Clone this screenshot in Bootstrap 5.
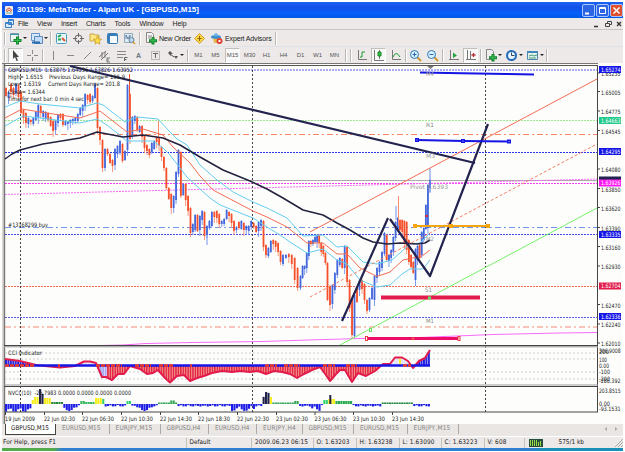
<!DOCTYPE html>
<html lang="en">
<head>
<meta charset="utf-8">
<title>MetaTrader</title>
<link href="https://cdn.jsdelivr.net/npm/bootstrap@5.3.0/dist/css/bootstrap.min.css" rel="stylesheet">
<style>
body{width:625px;height:452px;overflow:hidden;background:#fff;font:7px/1 "Liberation Sans",Arial,sans-serif;color:#222;padding:2px 2px 0}
.win{width:621px;background:#ece9e8}
.titlebar{height:16px;background:linear-gradient(#1c63f2,#1350e8 35%,#0560fa 70%,#0058e8);color:#fff;font-weight:700;font-size:8px;padding-left:3px}
.menus{height:12px;border-bottom:1px solid #c9c6c3}
.menus span{margin-right:9px}
.menus span,.lbl,.stat span{white-space:pre;display:inline-block}
.tools{height:17px}
.tools.one{height:16px}
.cell{width:17px;height:15px;flex:none;display:flex;align-items:center;justify-content:center}
.cell svg{width:13px;height:13px;overflow:visible}
.on{background:#f8f8f8;border:1px solid #c2bfba;border-right-color:#fff;border-bottom-color:#fff;width:15px;margin:0 1px}
.tf{font-size:6px;color:#555}
.caret{width:4px;flex:none;display:flex;align-items:center}
.caret::after{content:"";border:2px solid transparent;border-top-color:#222;border-bottom:0;margin-left:-1px}
.sep{flex:none;display:flex;justify-content:center}
.sep::after{content:"";width:2px;height:13px;border-left:1px solid #bab7b2;border-right:1px solid #fff;margin:auto}
.w3{width:3px}.w4{width:4px}.w9{width:9px}.w5{width:5px}
.plot{display:block;height:361px;width:621px}
.plot text,.tabsbar,.stat{font-family:"DejaVu Sans Condensed","DejaVu Sans",sans-serif}
.tabsbar{height:12px;background:#e9e6e3;font-size:6.4px;color:#888}
.tabsbar .tb{height:10px;flex:none;line-height:9px;border-right:1px solid #aaa;padding-left:6px;white-space:pre}
.tabsbar .act{height:11px;width:51px;background:#fff;border:1px solid #444;border-top:0;color:#222;margin-left:3px;padding-left:5px}
.stat{height:12px;border-top:1px solid #fff;font-size:6.4px}
.stat .box{border-right:1px solid #c5c2bd;height:10px;flex:none;line-height:9px;padding-left:3px}
.stat .box.first{padding-left:1px}
.task{height:3px;background:linear-gradient(90deg,#55ab4b 0 52px,#2f80cf 60px 530px,#1a8fb8 540px)}
.wb{width:13px;height:13px;border-radius:2px;border:1px solid #a9c5fa;background:#2c66e5;margin-left:1px}
.wb.red{background:#e0502c}
.wb svg{display:block}
</style>
<script src="https://cdn.jsdelivr.net/npm/bootstrap@5.3.0/dist/js/bootstrap.bundle.min.js"></script>
</head>
<body>
<div class="win">
<div class="titlebar d-flex align-items-center">
<svg width="8" height="9" class="me-1"><rect width="8" height="9" rx="1" fill="#f4ece4"/><path d="M1 5Q4-1 7 5M2 6Q4 2 6 6" stroke="#d4523b" fill="none"/><path d="M1 7h6" stroke="#6a9"/></svg>
<span class="lbl" data-w="182">301199: MetaTrader - Alpari UK - [GBPUSD,M15]</span>
<div class="ms-auto d-flex">
<div class="wb"><svg width="11" height="11"><path d="M2 8.5h4" stroke="#fff" stroke-width="2"/></svg></div>
<div class="wb"><svg width="11" height="11"><path d="M2.5 3v5.500h6v-6h-6v1h6" stroke="#fff" fill="none"/></svg></div>
<div class="wb red"><svg width="11" height="11"><path d="M2.500 2.500l6 6m0-6l-6 6" stroke="#fff" stroke-width="1.500"/></svg></div>
</div>
</div>
<div class="menus d-flex align-items-center">
<svg width="16" height="11"><path d="M6.500 1.500h5v5h-5zM3.500 4.500h6v5h-6z" fill="#dcebfa" stroke="#3c7dbd"/><path d="M4 5.500h5M7 2.500h4" stroke="#3c8de0"/></svg>
<span data-w="10">File</span><span data-w="15">View</span><span data-w="16">Insert</span><span data-w="19.500">Charts</span><span data-w="16">Tools</span><span data-w="24">Window</span><span data-w="14">Help</span>
<svg class="ms-auto" width="32" height="10"><path d="M3 7.500h4" stroke="#333" stroke-width="1.500"/><path d="M14.500 4.500h4v3h-4zM16.500 4V2.500h4v3h-2" stroke="#444" fill="none"/><path d="M26 3l4 4m0-4l-4 4" stroke="#333" stroke-width="1.300"/></svg>
</div>
<div class="tools one d-flex align-items-center">
<div class="sep w5"></div>
<div class="cell"><svg viewBox="0 0 13 13"><path d="M1.500 1.500h8v8h-8z" fill="#edf6ef" stroke="#7d9bad"/><path d="M1 2.500h9" stroke="#3a99a9"/><path d="M8.500 4.500v8M4.500 8.500h8" stroke="#14852c" stroke-width="3"/><path d="M8.500 5.500v6M5.500 8.500h6" stroke="#32bd4c"/></svg></div><div class="caret"></div>
<div class="cell"><svg viewBox="0 0 13 13"><path d="M1.500 1.500h8v7h-8z" fill="#d5e8fc" stroke="#6594c8"/><path d="M4.500 4.500h8v7h-8z" fill="#c0dcf8" stroke="#5c89bb"/><path d="M2 10.500h8" stroke="#256bb0" stroke-width="2"/></svg></div><div class="caret"></div>
<div class="sep w4"></div>
<div class="cell"><svg viewBox="0 0 13 13"><rect x="1.500" y="1.500" width="10" height="10" rx="1" fill="#e7f7fc" stroke="#4d9cbb"/><path d="M3 5l3-2M3 7.500h3" stroke="#20a650" stroke-width="2"/><path d="M7 6l3 3" stroke="#dc5732" stroke-width="2"/></svg></div>
<div class="cell"><svg viewBox="0 0 13 13" fill="none" stroke="#666"><circle cx="6.500" cy="6.500" r="3.500"/><path d="M6.500 1v4m0 3v4M1 6.500h4m3 0h4"/></svg></div>
<div class="cell"><svg viewBox="0 0 13 13"><path d="M1 2h4l1 1h4v6H1z" fill="#ffe987" stroke="#c9a544"/><path d="M8.500 4l1.200 3 3 .3-2.400 2 .7 3-2.500-1.700L6 12.200l.7-3-2.400-2 3-.2z" fill="#ffe04b" stroke="#c4921d" stroke-width=".7"/></svg></div>
<div class="cell"><svg viewBox="0 0 13 13"><rect x="1.500" y="1.500" width="10" height="10" rx="1" fill="#f4faff" stroke="#377bb5"/><path d="M2 3h9M3 4v7" stroke="#397fbb" stroke-width="2"/></svg></div>
<div class="cell"><svg viewBox="0 0 13 13"><path d="M1.500 1.500h8v9h-8z" fill="#dcecf8" stroke="#98a9b6"/><path d="M3 7V3l2 4 2-4v4" stroke="#6585a8" fill="none"/><circle cx="8.500" cy="8" r="2.500" fill="#bcdaf0" stroke="#69839b"/><path d="M10 10l2 2" stroke="#d39a26" stroke-width="1.600"/></svg></div>
<div class="sep w4"></div>
<div class="cell"><svg viewBox="0 0 13 13"><path d="M2.500.5h5l2 2v8h-7z" fill="#f6f6f6" stroke="#888"/><path d="M4 4h4M4 6h3" stroke="#888"/><path d="M9 5v7.500M5 8.800h8" stroke="#15852c" stroke-width="3"/><path d="M9 6v5M6 8.800h6" stroke="#38c258"/></svg></div>
<span class="lbl" data-w="32">New Order</span>
<div class="cell"><svg viewBox="0 0 13 13"><path d="M6.500 1.500l5 5-5 5-5-5z" fill="#ffd649" stroke="#cfa02a"/><path d="M6.500 4v5M4.500 6.500h4" stroke="#8a6511"/></svg></div>
<div class="cell"><svg viewBox="0 0 13 13"><ellipse cx="6" cy="5" rx="5" ry="2" fill="#3e8ed0"/><path d="M3 4q3-6 6 0z" fill="#71b8e9"/><path d="M3 6q3 2 6 0l-1 5H4z" fill="#e4b94a"/><circle cx="9.500" cy="9" r="3" fill="#dd3f31"/><path d="M8.500 8h2v2h-2z" fill="#fff"/></svg></div>
<span class="lbl" data-w="46.500">Expert Advisors</span><div class="sep w9"></div>
</div>
<div class="tools d-flex align-items-center border-top">
<div class="sep w5"></div>
<div class="cell on"><svg viewBox="0 0 13 13"><path d="M4 1v9l2-2 1.500 4 1.500-.6L7.500 8H10z" fill="#444"/></svg></div>
<div class="cell"><svg viewBox="0 0 13 13"><path d="M6.500 1v4m0 3v4M1 6.500h4m3 0h4" stroke="#888"/></svg></div><div class="sep w4"></div>
<div class="cell"><svg viewBox="0 0 13 13"><path d="M6.500 2v9" stroke="#888"/></svg></div>
<div class="cell"><svg viewBox="0 0 13 13"><path d="M3 6.500h7" stroke="#888"/></svg></div>
<div class="cell"><svg viewBox="0 0 13 13"><path d="M3 10l7-7" stroke="#888"/></svg></div>
<div class="cell"><svg viewBox="0 0 13 13"><path d="M1 8l7-6M3 11l7-7M4 3v6M7 3v6M9 9v4m0-4h3m-3 2h2m-2 2h3" stroke="#777" fill="none"/></svg></div>
<div class="cell"><svg viewBox="0 0 13 13"><path d="M2 2.500h9M2 5.500h9M2 8.500h6" stroke="#888"/><path d="M9.500 12V8.500h3m-3 2h2" stroke="#666" fill="none"/></svg></div>
<div class="cell fw-bold text-secondary">A</div>
<div class="cell"><svg viewBox="0 0 13 13"><path d="M2.500 2.500h8v8h-8z" fill="none" stroke="#888" stroke-dasharray="1 1"/><path d="M4 4.500h5M6.500 4v5" stroke="#666"/></svg></div>
<div class="cell"><svg viewBox="0 0 13 13"><path d="M4 2l3 3H5v2L2 4zM8 7h4l-2 3z" fill="#555"/><path d="M4 5l4 3" stroke="#555"/></svg></div><div class="caret"></div><div class="sep w5"></div>
<div class="cell tf">M1</div><div class="cell tf">M5</div><div class="cell tf on">M15</div><div class="cell tf">M30</div><div class="cell tf">H1</div><div class="cell tf">H4</div><div class="cell tf">D1</div><div class="cell tf">W1</div><div class="cell tf">MN</div>
<div class="sep w5"></div><div class="sep w5"></div>
<div class="cell"><svg viewBox="0 0 13 13" fill="none"><path d="M3.500 1v9.500H12" stroke="#777"/><path d="M5 8h2V3h3" stroke="#1c9b2f"/></svg></div>
<div class="cell on"><svg viewBox="0 0 13 13" fill="none"><path d="M2.500 1v10.500H12M7.500 1v9" stroke="#777"/><path d="M6 3h3v4H6z" fill="#2bc53b" stroke="#198327"/></svg></div>
<div class="cell"><svg viewBox="0 0 13 13" fill="none"><path d="M3.500 1v9.500H12" stroke="#777"/><path d="M4 8q3-7 7 0" stroke="#1c9b2f"/></svg></div><div class="sep w3"></div>
<div class="cell"><svg viewBox="0 0 13 13"><path d="M8 8l4 4" stroke="#cb9a2d" stroke-width="2"/><circle cx="5.500" cy="5.500" r="4" fill="#d8f0ff" stroke="#2d78b8"/><path d="M5.500 3.500v4M3.500 5.500h4" stroke="#2369b0"/></svg></div>
<div class="cell"><svg viewBox="0 0 13 13"><path d="M8 8l4 4" stroke="#cb9a2d" stroke-width="2"/><circle cx="5.500" cy="5.500" r="4" fill="#d8f0ff" stroke="#2d78b8"/><path d="M3.500 5.500h4" stroke="#2369b0"/></svg></div><div class="sep w4"></div>
<div class="cell"><svg viewBox="0 0 13 13"><path d="M3.500 1v10M2 10.500h10" stroke="#777" fill="none"/><path d="M6 3.500l4 3L6 9z" fill="#25a23a"/></svg></div>
<div class="cell on"><svg viewBox="0 0 13 13"><path d="M3.500 1v10M2 10.500h10M6.500 2v8" stroke="#777" fill="none"/><path d="M7.500 6h4M9.500 4v4" stroke="#b33" stroke-width="1.300"/></svg></div><div class="sep w3"></div>
<div class="cell"><svg viewBox="0 0 13 13"><path d="M2.500.5h5l2 2v8h-7z" fill="#eee" stroke="#888"/><path d="M9 5v7.500M5 8.800h8" stroke="#15852c" stroke-width="3"/><path d="M9 6v5M6 8.800h6" stroke="#38c258"/></svg></div><div class="caret"></div>
<div class="cell"><svg viewBox="0 0 13 13"><circle cx="6.500" cy="6.500" r="4.500" fill="#eaf6ff" stroke="#246bb7" stroke-width="2"/><path d="M6.500 3.500v3h3" stroke="#345" fill="none"/></svg></div><div class="caret"></div>
<div class="cell"><svg viewBox="0 0 13 13"><path d="M1.500 2.500h10v8h-10z" fill="#e2f1ec" stroke="#4d88b0"/><path d="M1 3h11" stroke="#4287bd" stroke-width="2"/><path d="M3 7l3-1 2 1 3-1M3 9h7" stroke="#4b9d78" fill="none"/></svg></div><div class="caret"></div><div class="sep w4"></div>
</div>
<svg class="plot" id="plot" viewBox="2 63 621 361"></svg>
<div class="tabsbar d-flex">
<div class="tb act"><span data-w="38">GBPUSD,M15</span></div>
<div class="tb" data-b="53.500"><span data-w="38.500">EURUSD,M15</span></div><div class="tb" data-b="51"><span data-w="37">EURJPY,M15</span></div><div class="tb" data-b="48.500"><span data-w="34">GBPUSD,H4</span></div><div class="tb" data-b="48"><span data-w="34.500">EURUSD,H4</span></div><div class="tb" data-b="45.500"><span data-w="33">EURJPY,H4</span></div><div class="tb" data-b="51.500"><span data-w="38">GBPUSD,M15</span></div><div class="tb" data-b="53.500"><span data-w="39">EURUSD,M15</span></div><div class="tb" data-b="51"><span data-w="37">EURJPY,M15</span></div>
<svg class="ms-auto" width="22" height="10"><path d="M6 3v4L3.500 5zM14 3v4l2.500-2z" fill="#aaa"/></svg>
</div>
<div class="stat d-flex align-items-center">
<div class="box first" data-b="184.500"><span data-w="53">For Help, press F1</span></div>
<div class="box" data-b="65.500"><span data-w="21">Default</span></div>
<div class="box" data-b="61.500"><span data-w="53">2009.06.23 06:15</span></div>
<div class="box" data-b="43"><span data-w="33">O: 1.63203</span></div>
<div class="box" data-b="43"><span data-w="33">H: 1.63238</span></div>
<div class="box" data-b="42"><span data-w="32">L: 1.63090</span></div>
<div class="box" data-b="43"><span data-w="33">C: 1.63223</span></div>
<div class="box" data-b="40"><span data-w="19">V: 608</span></div>
<svg class="ms-1" width="14" height="8"><path d="M0 0h14v8H0z" fill="#254e3c"/><path d="M1.500 1v6m2-6v6m2-6v6m2-6v6m2-4v4m2-5v5" stroke="#9bdb43"/></svg>
<span class="ms-3" data-w="25.500">575/1 kb</span>
<svg class="ms-auto" width="9" height="9"><path d="M1 9l8-8M4 9l5-5M7 9l2-2" stroke="#aaa"/></svg>
</div>
</div>
<div class="task"></div>
<script>
// Set text and box widths
document.querySelectorAll('[data-w]').forEach(e=>{
  e.style.display='inline-block';
  const w=e.getBoundingClientRect().width;
  e.style.letterSpacing=((+e.dataset.w-w)/e.textContent.length)+'px';
});
document.querySelectorAll('[data-b]').forEach(e=>e.style.width=e.dataset.b+'px');

let s='';
const L=(x1,y1,x2,y2,c,w=1,d='')=>s+=`<line x1="${x1}" y1="${y1}" x2="${x2}" y2="${y2}" stroke="${c}" stroke-width="${w}" stroke-dasharray="${d}"/>`;
const R=(x,y,w,h,c,st='none')=>s+=`<rect x="${x}" y="${y}" width="${w}" height="${h}" fill="${c}" stroke="${st}"/>`;
const T=(x,y,t,w,c='#222',f=6)=>s+=`<text x="${x}" y="${y}" font-size="${f}" fill="${c}" textLength="${w}" lengthAdjust="spacingAndGlyphs" xml:space="preserve">${t}</text>`;
const P=(p,c,w=1,f='none')=>s+=`<polyline points="${p}" fill="${f}" stroke="${c}" stroke-width="${w}" stroke-linejoin="round"/>`;
R(2,63,621,361,'#fdfefc');
R(2,63,2,361,'#d8d5d2');L(4.5,64,4.5,424,'#777',1.4);
R(2,63,596,1,'#777');R(4,65,594,1,'#555');
L(597.5,65,597.5,412,'#444');

// Horizontal levels
L(5,70,597,70,'#8f90f3',1.3,'2 1');
L(5,120.5,597,120.5,'#9de990',1,'2 1');
L(5,134.5,597,134.5,'#fa8868',1,'6 3 2 3');
L(5,152.5,597,152.5,'#2a35ea',1,'2 1');
L(5,180.5,597,180.5,'#aaa');
L(5,183.5,597,183.5,'#f53df5',1,'2 1');
L(5,227.5,597,227.5,'#6f97e9',1,'6 3 2 3');
L(5,234.5,597,234.5,'#4648e8',1,'2 1');
L(5,286.5,597,286.5,'#f06a50',1,'2 1');
L(5,317.5,597,317.5,'#5a5cec',1,'2 1');
L(5,327,597,327,'#f5b3a0',1.3,'6 3 2 3');
L(5,194.500,597,179,'#f96bf9',1,'2 1');
P('100,345.500 123,345 146,343.500 192,342.500 262,341.500 308,340 360,338.500 420,337.500 493,334.500 560,333 597,332.500','#f96bf9');
for(const x of [20.5,252.5,485.5])L(x,66,x,412,'#444',1,'2 2');

// Candles: direction, body top, body bottom
const C=`r88,96 b92,98 r84,92 r88,95 b84,93 r85,97 r92,113 r110,118 r113,123 b118,124 r120,122 b118,124 b112,120 b105,118 r106,113 b111,117 b112,119 r113,120 r117,126 r121,131 b121,130 b115,123 r114,118 r114,125 b121,125 b122,124 b120,123 b119,121 b118,121 b114,121 b108,115 b105,111 b94,106 r95,100 r94,102 b96,101 b84,98 r88,128 r127,140 r140,168 b149,168 r149,154 r154,163 r160,166 b149,165 b146,154 b141,152 r144,161 b151,160 b85,150 r94,139 b117,135 b116,121 r117,130 b126,132 r126,137 r136,148 r145,151 r149,155 b143,152 b141,149 r137,142 r138,146 r147,157 r157,168 r168,188 r188,199 r194,208 b196,208 b172,200 b150,174 r152,196 b184,195 r184,200 r196,211 r208,233 b224,232 b215,230 r215,231 b216,230 b211,220 r212,236 b226,235 b221,228 b212,226 r212,217 r211,218 r214,224 b221,224 b219,224 b210,219 r212,216 r214,223 r221,231 b227,230 r222,228 b221,229 r223,230 b226,230 b226,231 b221,227 r223,227 r226,232 b222,231 b220,226 r221,247 r245,255 b248,256 b241,252 r240,244 r241,247 r243,252 r251,262 b255,264 b255,258 r254,257 r255,264 r258,280 r268,288 b276,288 b266,278 b266,269 b253,268 b241,256 r241,244 b240,244 b237,242 b235,242 r235,243 r243,252 r246,254 r253,263 r263,300 r286,305 b285,304 b273,290 b260,275 b258,265 r259,268 b246,268 r247,282 r280,308 r300,335 b295,336 r287,302 b281,290 r280,289 r284,300 r300,311 b298,310 b288,299 b276,300 b268,278 b262,272 b252,268 b233,254 r235,260 b255,261 b250,258 b237,252 b222,238 b218,230 r220,230 r220,232 r221,244 r222,250 r240,262 r255,267 r262,273 b249,280 b246,260 r245,258 b232,255 b228,240 b205,229 b185,228 b180,188`.split(' ');
const K=[['r88,96',6],['r92,113',21],['r88,128',97.500],['b85,150',127.500],['b150,174',178.500],['r208,233',190.500],['r212,236',204.500],['r221,247',263.500],['b255,264',283],['b276,288',300.500],['r263,300',327.500],['b295,336',354.500],['b233,254',384.500],['b249,280',415.500],['b180,188',430]].map(([k,x])=>[C.indexOf(k),x]);
const cx=i=>{for(let j=1;j<K.length;j++)if(i<=K[j][0]){const[a,b]=K[j-1],[c,d]=K[j];return b+(d-b)*(i-a)/(c-a);}};
C.forEach((d,i)=>{
  const [a,b]=d.slice(1).split(',').map(Number),r=d[0]=='r';
  const x=cx(i),u=1+(i*7)%7,v=1+(i*5)%6;
  L(x,a-u,x,b+v,r?'#f98c70':'#7291ea',.9);R(x-.9,a,1.800,Math.max(b-a,1),r?'#f4502c':'#4468dc');
});
L(129.5,74,129.5,94,'#f4502c');L(430,168,430,192,'#6d8fe0');L(398.500,196,398.500,225,'#f98c70');L(396,206,396,220,'#7291ea');L(207,235,207,245,'#7291ea');L(158.500,121,158.500,140,'#f98c70');

// Moving averages
P('5,107 20,101 40,104 80,108 97,103 103,105 125,122 137,117 158,119 170,132 177,139 187,145 200,165 217,180 233,192 253,202 267,208 287,218 303,236 323,235 337,247 347,246 363,262 377,264 392,260 410,244 420,243 430,233','#64ccef');
P('5,118 22,109 40,112 80,118 100,111 127,132 143,129 163,135 173,147 190,163 200,176 213,190 253,211 267,217 287,227 307,243 323,243 337,254 347,254 360,268 377,276.500 390,272 403,260 413,258 422,256 430,250','#f26c55');
P('5,126 23,116 40,118 80,123 97,119 107,125 127,141 153,141 163,148 170,155 187,177 200,189 210,198 220,205 253,218 267,227 280,235 290,242 307,253 323,249 337,260 347,264 360,280 377,287 390,285 402,274 410,269 423,269 430,260','#64ccef');
P('5,159 12,154 20,150 43,144 80,138 97,132 123,137 143,135 163,138 180,145 200,157 223,170 250,181 267,189 283,198 303,210 323,215 337,223 350,230 363,238 373,242 387,244 400,243 417,244 425,243 430,240','#22223f',1.500);

// Trend lines
L(310,232,597,79,'#f26c55');L(310,297,597,144,'#f47e62',1,'3 2');
L(340,345,597,208,'#77f06b');
L(70,66,475,163,'#23234f',2.200);
P('342,321 388,218','#23234f',2.200);P('390,219 430,276 488,124','#23234f',2.200);
P('420,72.500 448,73 506,74 534,74.500','#1414e4',2);
P('417,140 463,141 509,141.500','#1414e4',2);
for(const [x,y] of [[417,140],[463,141],[509,141.500]]){R(x-2,y-2,4,4,'#1414e4');R(x-.6,y-.6,1.200,1.200,'#99f');}
L(415,226,488,226,'#f5a60f',2);for(const x of [415,451,488])R(x-2,224,4,4,'#f5a60f');
R(381,295.500,99,4,'#e31b4c');R(366,337,93,3,'#ee0c66');
for(const x of [366.5,413,459])R(x-1,x==413?338:336.500,2,x==413?1.500:4,'#fff','#e83b42');
R(369.500,328.500,2,3,'#fff','#6d6');R(428.500,297,2,2,'#fff','#6d6');R(425,215,3,2,'#d3293e');
s+='<path d="M427 66h7l-3.500 3z" fill="#777"/>';
T(426,76,'M4',8,'#999');T(426,127,'R1',8,'#888');T(426,158,'M3',9,'#999');T(410,189,'Pivot 1.6393',38,'#999');T(426,241,'M2',8,'#999');T(425,292,'S1',7,'#888');T(426,323,'M1',8,'#888');

T(8,72.300,'GBPUSD,M15  1.63875 1.64036 1.63826 1.63952',125);
T(8,79,'High= 1.6515',35);T(49,79,'Previous Days Range= 195.9',76);
T(8,86.300,'Low= 1.6319',33);T(48,86.300,'Current Days Range= 201.8',72);
T(8,93.500,'Close= 1.6344',37);T(8,101,'Time for next bar: 0 min 4 sec',76);
T(8,226.500,'#13168299 buy',40);

// Price axis
[['1.65235',75.500],['1.65005',94],['1.64775',113.500],['1.64545',133],['1.64080',171.500],['1.63850',191],['1.63620',210],['1.63390',230],['1.63160',249],['1.62930',268.500],['1.62470',307],['1.62240',326.500],['1.62010',345.500]].forEach(([t,y])=>{L(598,y-2.500,600,y-2.500,'#444');T(601,y+.5,t,19.5);});
R(599,176.500,22,4,'#23234f');
[['1.65274',69.5,'#1414e8'],['1.64663',120.5,'#22c98a'],['1.64295',151.5,'#1414e8'],['1.63926',183,'#ff18f4'],['1.63335',234.5,'#1414e8'],['1.62704',286,'#e31b4c'],['1.62336',316.5,'#1414e8']].forEach(([t,y,c])=>{R(599,y-3.5,22,7,c);T(601,y+2.2,t,19.500,'#fff');});

// CCI pane
R(4,345,594,1.500,'#444');R(4,346.500,594,1,'#bbb');
for(const y of [353,359,372,379])L(5,y,597,y,'#ccc',1,'2 2');
const O=[5,359,20,361,36,365,45,366,60,367.5,75,366,84,361.5,90,361.5,96,363,102,377,106,377,112,380,118,374,124,374,130,366,140,369,147,374,153,373,158,370,165,378,170,382.5,177,376,184,375,190,381,197,378,204,376,212,373,222,371,232,372,240,371,250,372,258,371,266,374,274,371,282,372,290,374,297,378,304,374,312,370,320,367,326,375,330,381,336,374,340,370,345,370,352,382,358,373,366,376,375,371,383,364,390,364,395,357.5,402,357.5,408,361,413,368,419,361,425,358,430,350];
const pts=[];for(let i=0;i<O.length;i+=2)pts.push([O[i],O[i+1]]);
const at=x=>{for(let i=1;i<pts.length;i++)if(x<=pts[i][0]){const[a,b]=pts[i-1],[c,d]=pts[i];return b+(d-b)*(x-a)/(c-a);}return 350;};
for(let x=6;x<430;x+=2.43){
  const y=at(x),n=y>365.5,mid=x>99&&x<108;
  R(x-1,Math.min(y,365.5),2,Math.abs(y-365.5),n?(mid?(x<106?'#a9a8f5':'#f8ee53'):'#e5264a'):(x>70&&x<97||x>385&&x<413?'#dfe1f8':'#2323e0'));
  if(n&&!mid)L(x+1,366,x+1,y,'#f09b76',.7);
}
P(pts.map(p=>p.join()).join(' '),'#e31b4c',2);
L(5,365.500,430,365.500,'#1717e5',2.500);
for(const [a,b] of [[5,34],[58,60],[96,122],[135,151],[159,174],[190,192],[265,277],[284,300],[323,335],[346,357],[403,411]])L(a,365.5,b,365.5,'#ef3b27',2.500,'4 1');
R(399,359,2,5,'#ffee25');
T(8,355,'CCI Indicator',34);
for(const [t,y,w] of [['306.9008',353,21.500],['200',354,10],['100',361.5,8],['0.00',367.5,10],['-100',374,11],['-200',380.500,11],['-286.392',382.500,21.500]])T(599,y,t,w);
R(4,384.500,594,1,'#999');R(4,386,594,1,'#444');

// NVCI pane
const N=x=>{
  if(x<32)return[3+Math.abs(Math.sin(x*.32))*5,'#1d1de6'];
  if(x<38)return[x<35?-4:-7,'#f8ee20'];if(x<43)return[-15+Math.abs(x-40)*2,'#22224b'];if(x<51)return[-6,'#f8ee20'];
  if(x<62)return[-2,'#23883a'];
  if(x>80&&x<94)return[-2-(x<86?1:0),'#35b85b'];if(x>=95&&x<101)return[-6,'#f8ee20'];if(x>=101&&x<105)return[-5,'#36cf72'];
  if(x>127&&x<131)return[-3,'#35cf70'];if(x>=158&&x<178)return[x>169&&x<176?-3.5:-1.5,'#35a653'];
  if(x>262&&x<270)return[-14+Math.abs(x-267)*2,'#22224b'];if(x>=270&&x<273)return[-7,'#f8ee20'];
  if(x>=273&&x<300)return[x>295?-3:-1.5,'#35a653'];
  if(x>323&&x<328)return[-4,'#36cf72'];if(x>=328&&x<332)return[-5,'#f8ee20'];if(x>=332&&x<336)return[-5,'#f8ee20'];if(x>=336&&x<352)return[-3,'#23a94a'];if(x>382&&x<412)return[-1.5,'#23883a'];
  const big=x>64&&x<78||x>135&&x<152||x>230&&x<256||x>312&&x<320;
  return[big?2+Math.abs(Math.sin(x*.25))*5:1+Math.abs(Math.sin(x*.4))*1.5,'#1d1de6'];
};
for(let x=6;x<430;x+=2.43){const[h,c]=N(x);R(x-1,h<0?404+h:404,2.1,Math.abs(h),c);}
R(329.3,395,2,9,'#22224b');
T(8,394.500,'NVCI (10)  -25.7983 0.0000 0.0000 0.0000 0.0000',123);
T(599,393,'203.8515',21.500);T(599,405.500,'0.00',11);T(599,411,'-93.1531',21.500);
L(5,412,598,412,'#444');
[['19 Jun 2009',5,30],['22 Jun 02:30',44,31],['22 Jun 06:30',82,32],['22 Jun 10:30',121,32],['22 Jun 14:30',160,32],['22 Jun 18:30',198,32],['22 Jun 22:30',237,32],['23 Jun 02:30',276,32],['23 Jun 06:30',314.5,32],['23 Jun 10:30',353,32],['23 Jun 14:30',392,32]].forEach(([t,x,w])=>{L(x+.5,412,x+.5,415,'#444');T(x,420.500,t,w);});
document.getElementById('plot').innerHTML=s;
</script>
</body>
</html>
